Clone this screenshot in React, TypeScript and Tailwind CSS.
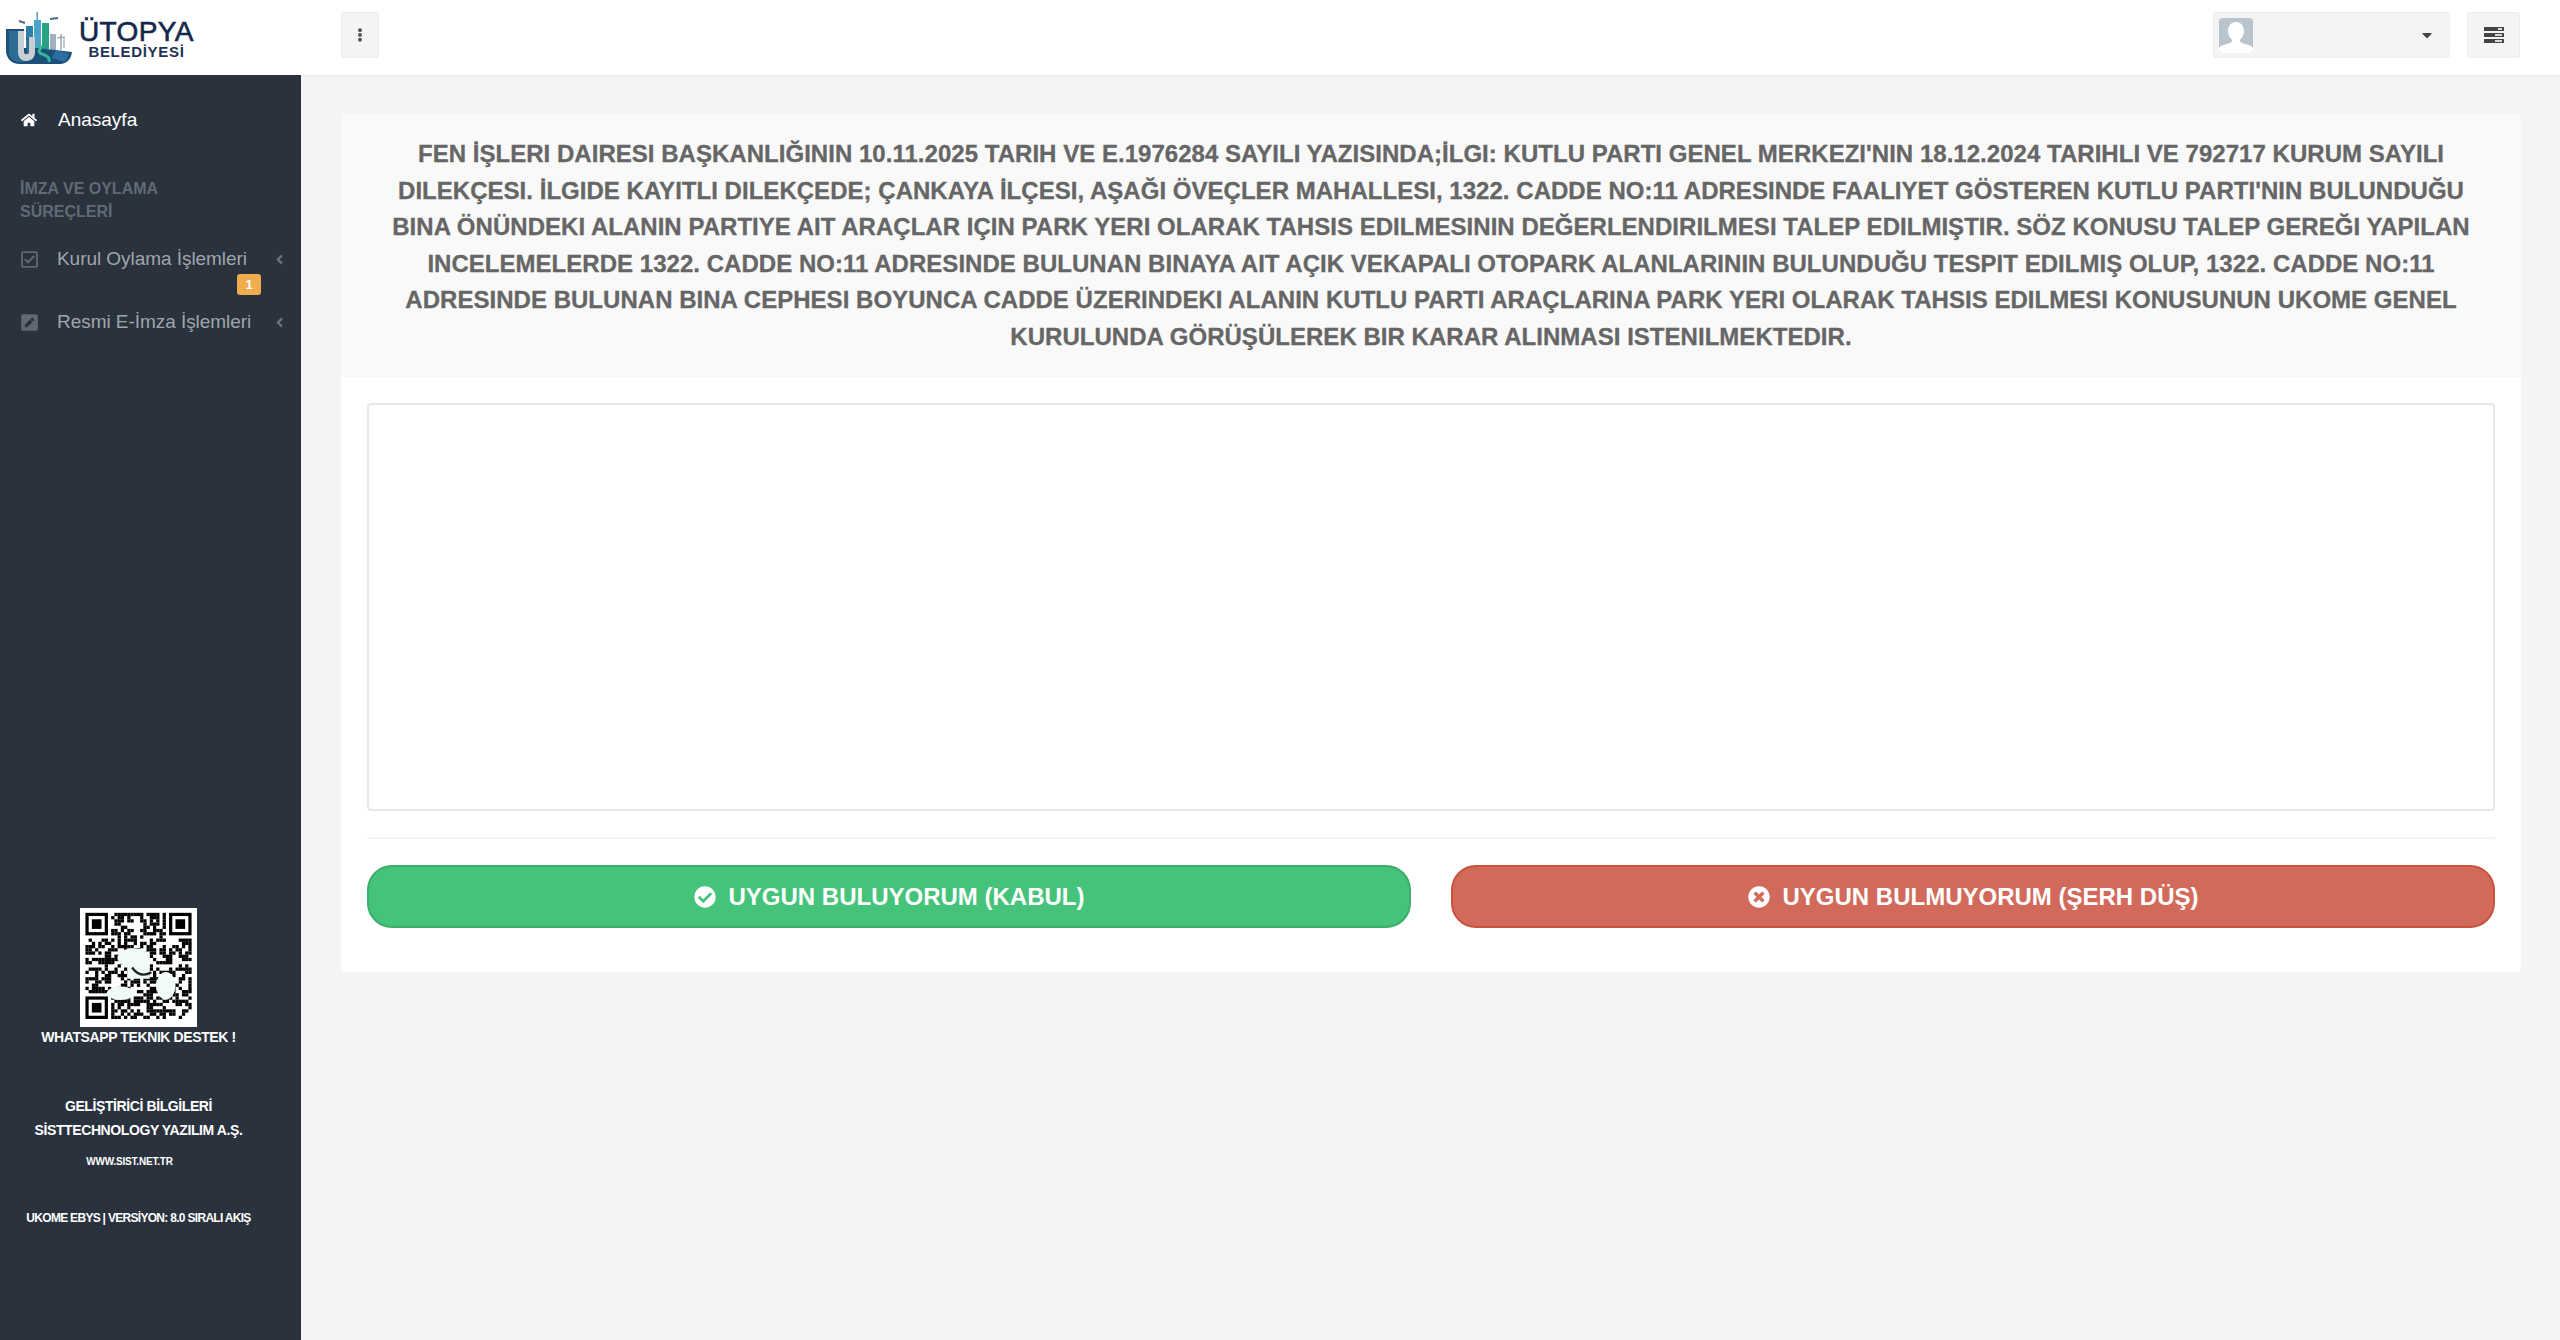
import React from "react";
import {
  FaHome,
  FaRegCheckSquare,
  FaPenSquare,
  FaAngleLeft,
  FaEllipsisV,
  FaCaretDown,
  FaCheckCircle,
  FaTimesCircle,
} from "react-icons/fa";

const finder = (x: number, y: number) => (
  <g key={`${x}-${y}`}>
    <rect x={x} y={y} width={7} height={7} fill="#000" />
    <rect x={x + 1} y={y + 1} width={5} height={5} fill="#fff" />
    <rect x={x + 2} y={y + 2} width={3} height={3} fill="#000" />
  </g>
);

function QrCode() {
  const size = 33;
  const cells: React.ReactNode[] = [];
  let seed = 1976284;
  for (let y = 0; y < size; y++) {
    for (let x = 0; x < size; x++) {
      seed = (seed * 1103515245 + 12345) & 0x7fffffff;
      const inFinder = (x < 8 && y < 8) || (x > 24 && y < 8) || (x < 8 && y > 24);
      if (!inFinder && (seed >> 16) % 100 < 52) {
        cells.push(<rect key={`${x}-${y}`} x={x} y={y} width={1.02} height={1.02} fill="#000" />);
      }
    }
  }
  return (
    <svg viewBox="-1.5 -1.5 36 37" className="h-[119px] w-[117px] bg-white">
      {cells}
      {finder(0, 0)}
      {finder(26, 0)}
      {finder(0, 26)}
      <ellipse cx="15" cy="14" rx="5" ry="3" fill="#f0fbf7" />
      <ellipse cx="25" cy="22.7" rx="3" ry="4.3" fill="#f0fbf7" />
      <ellipse cx="11" cy="25" rx="4.4" ry="2.1" fill="#f0fbf7" />
      <path d="M13 15.5 h7 v5 h-7z" fill="#f0fbf7" />
      <path d="M14.5 17 q2.5 3.5 6 1.5" fill="none" stroke="#222" strokeWidth="0.7" />
    </svg>
  );
}

function CityLogo() {
  return (
    <svg viewBox="0 0 68 52" className="h-[52px] w-[68px] shrink-0">
      <rect x="30.5" y="0" width="1.4" height="9" fill="#4a8fb8" />
      <rect x="28" y="8" width="7" height="30" fill="#4aa3c8" />
      <rect x="20" y="14" width="7" height="22" fill="#2d7fa8" />
      <rect x="36" y="11" width="7" height="26" fill="#27a285" />
      <rect x="44" y="22" width="6" height="16" fill="#9fb2c0" />
      <path d="M55 22 v16 M51 26 l8 -1" stroke="#7f97a8" strokeWidth="1.2" />
      <path d="M58 26 v10" stroke="#7f97a8" strokeWidth="1" />
      <path d="M13 9 l6 2 M44 7 l8 -1" stroke="#4b6b80" strokeWidth="2" />
      <path d="M0 17 H18 V36 H32 L66 40 C65 48 60 52 54 52 H14 C5 52 0 46 0 38 Z" fill="#1d5079" />
      <path d="M3 19 h10 v20 c0 6 8 6 8 0 v-14 h6 v16 c0 12 -24 12 -24 0z" fill="#2c6c94" />
      <path d="M13 19 h-1 v21 c0 6 4 9 8 9 c6 0 9 -4 9 -9 V25 h-6 v15 c0 3 -5 3 -5 0 V19z" fill="#c8ced2" />
      <path d="M32 33 c8 2 -4 6 4 9 c5 2 8 3 7 8" fill="none" stroke="#35b79a" strokeWidth="3" />
      <path d="M50 38 l13 4 l-4 8 l-13 -4z" fill="#2d6ea3" />
    </svg>
  );
}

function ListIcon() {
  return (
    <svg viewBox="0 0 20 16" className="h-[16px] w-[20px]">
      <rect y="0" width="20" height="4" rx="0.5" fill="#444" />
      <rect y="6" width="20" height="4" rx="0.5" fill="#444" />
      <rect y="12" width="20" height="4" rx="0.5" fill="#444" />
      <rect x="14" y="1.2" width="4" height="1.6" fill="#fff" />
      <rect x="11" y="7.2" width="7" height="1.6" fill="#fff" />
      <rect x="11" y="13.2" width="7" height="1.6" fill="#fff" />
    </svg>
  );
}

function MenuItem({ icon, label }: { icon: React.ReactNode; label: string }) {
  return (
    <div className="flex h-[36px] items-center pl-[20px] pr-[14px] text-[#a0a5ab]">
      <span className="w-[37px] shrink-0 text-[#5f6772]">{icon}</span>
      <span className="text-[19px] tracking-[-0.05px]">{label}</span>
      <FaAngleLeft className="ml-auto text-[#6b727c]" size={15} />
    </div>
  );
}

export default function App() {
  const footerText = "text-white font-bold text-center";
  return (
    <div className="flex min-h-screen flex-col bg-[#f4f4f4] font-['Liberation_Sans',Arial,sans-serif]">
      <header className="flex h-[75px] items-start bg-white shadow-[0_1px_3px_rgba(0,0,0,0.04)]">
        <div className="flex h-[75px] w-[301px] shrink-0 items-center pl-[6px]">
          <CityLogo />
          <div className="ml-[5px] flex flex-col items-center pt-[3px] text-[#14284b]">
            <span className="text-[28px] leading-[24px] tracking-[0.4px] [-webkit-text-stroke:0.6px_#14284b]">ÜTOPYA</span>
            <span className="text-[15px] font-bold leading-[15px] tracking-[0.7px] text-[#1d3455]">BELEDİYESİ</span>
          </div>
        </div>
        <button className="ml-[40px] mt-[12px] flex h-[46px] w-[38px] items-center justify-center rounded-[3px] border border-[#ececec] bg-[#f4f4f4] text-[#555]">
          <FaEllipsisV size={14} />
        </button>
        <div className="ml-auto mt-[12px] flex h-[46px] w-[237px] items-center rounded-[3px] border border-[#ececec] bg-[#f4f4f4] pl-[5px] pr-[14px]">
          <svg viewBox="0 0 34 35" className="h-[35px] w-[34px] rounded-[4px]">
            <rect width="34" height="35" fill="#b9c4cc" />
            <path d="M17 4 c5 0 8 4 8 9 c0 4 -2 7 -4 9 c0 2 1 3 5 4 c4 1 8 2 8 5 v4 H0 v-4 c0 -3 4 -4 8 -5 c4 -1 5 -2 5 -4 c-2 -2 -4 -5 -4 -9 c0 -5 3 -9 8 -9z" fill="#fff" />
          </svg>
          <FaCaretDown className="ml-auto text-[#444]" size={16} />
        </div>
        <button className="ml-[17px] mr-[40px] mt-[12px] flex h-[46px] w-[53px] items-center justify-center rounded-[3px] border border-[#ececec] bg-[#f4f4f4]">
          <ListIcon />
        </button>
      </header>

      <div className="flex flex-1">
        <aside className="flex w-[301px] shrink-0 flex-col bg-[#2a323e]">
          <div className="mt-[27px] flex h-[36px] items-center pl-[21px] text-white">
            <FaHome size={16} />
            <span className="ml-[21px] text-[19px]">Anasayfa</span>
          </div>
          <div className="mt-[39px] pl-[20px] text-[16px] font-bold leading-[23px] text-[#616974]">
            İMZA VE OYLAMA
            <br />
            SÜREÇLERİ
          </div>
          <div className="mt-[18px]">
            <MenuItem icon={<FaRegCheckSquare size={19} />} label="Kurul Oylama İşlemleri" />
            <div className="flex h-[27px] items-start justify-end pr-[40px]">
              <span className="-mt-[3px] flex h-[21px] w-[24px] items-center justify-center rounded-[3px] bg-[#f0ad4e] text-[13px] font-bold text-white">
                1
              </span>
            </div>
            <MenuItem icon={<FaPenSquare size={19} />} label="Resmi E-İmza İşlemleri" />
          </div>

          <div className="mt-[568px] flex flex-col items-center pr-[24px]">
            <QrCode />
            <div className={`text-[14px] tracking-[-0.4px] ${footerText}`}>WHATSAPP TEKNIK DESTEK !</div>
            <div className={`mt-[48px] text-[14px] tracking-[-0.4px] ${footerText}`}>GELİŞTİRİCİ BİLGİLERİ</div>
            <div className={`mt-[3px] text-[14px] tracking-[-0.4px] ${footerText}`}>SİSTTECHNOLOGY YAZILIM A.Ş.</div>
            <div className={`mt-[13px] pr-[18px] text-[10px] tracking-[-0.2px] ${footerText}`}>WWW.SIST.NET.TR</div>
            <div className={`mt-[40px] text-[12px] tracking-[-0.7px] ${footerText}`}>UKOME EBYS | VERSİYON: 8.0 SIRALI AKIŞ</div>
          </div>
        </aside>

        <main className="flex-1 pl-[40px] pr-[39px] pt-[39px]">
          <div className="rounded-[3px] bg-white">
            <div className="rounded-t-[3px] bg-[#f9f9f9] px-[40px] py-[22px] text-center text-[24px] font-bold leading-[36.5px] tracking-[0.03px] text-[#666] [-webkit-text-stroke:0.3px_#666]">
              FEN İŞLERI DAIRESI BAŞKANLIĞININ 10.11.2025 TARIH VE E.1976284 SAYILI YAZISINDA;İLGI: KUTLU PARTI GENEL MERKEZI'NIN 18.12.2024 TARIHLI VE 792717 KURUM SAYILI DILEKÇESI. İLGIDE KAYITLI DILEKÇEDE; ÇANKAYA İLÇESI, AŞAĞI ÖVEÇLER MAHALLESI, 1322. CADDE NO:11 ADRESINDE FAALIYET GÖSTEREN KUTLU PARTI'NIN BULUNDUĞU BINA ÖNÜNDEKI ALANIN PARTIYE AIT ARAÇLAR IÇIN PARK YERI OLARAK TAHSIS EDILMESININ DEĞERLENDIRILMESI TALEP EDILMIŞTIR. SÖZ KONUSU TALEP GEREĞI YAPILAN INCELEMELERDE 1322. CADDE NO:11 ADRESINDE BULUNAN BINAYA AIT AÇIK VEKAPALI OTOPARK ALANLARININ BULUNDUĞU TESPIT EDILMIŞ OLUP, 1322. CADDE NO:11 ADRESINDE BULUNAN BINA CEPHESI BOYUNCA CADDE ÜZERINDEKI ALANIN KUTLU PARTI ARAÇLARINA PARK YERI OLARAK TAHSIS EDILMESI KONUSUNUN UKOME GENEL KURULUNDA GÖRÜŞÜLEREK BIR KARAR ALINMASI ISTENILMEKTEDIR.
            </div>
            <div className="px-[26px] pb-[44px] pt-[26px]">
              <textarea className="block h-[408px] w-full resize-none rounded-[4px] border-2 border-[#e8e8e8] bg-white" />
              <div className="mt-[26px] h-[2px] bg-[#f4f4f4]" />
              <div className="mt-[26px] grid grid-cols-2 gap-[40px]">
                <button className="flex h-[63px] items-center justify-center gap-[13px] rounded-[25px] border-2 border-[#3bae6a] bg-[#46c37b] text-[24px] font-bold text-white">
                  <FaCheckCircle size={22} />
                  UYGUN BULUYORUM (KABUL)
                </button>
                <button className="flex h-[63px] items-center justify-center gap-[13px] rounded-[25px] border-2 border-[#c9523f] bg-[#d26a5c] text-[24px] font-bold text-white">
                  <FaTimesCircle size={22} />
                  UYGUN BULMUYORUM (ŞERH DÜŞ)
                </button>
              </div>
            </div>
          </div>
        </main>
      </div>
    </div>
  );
}
